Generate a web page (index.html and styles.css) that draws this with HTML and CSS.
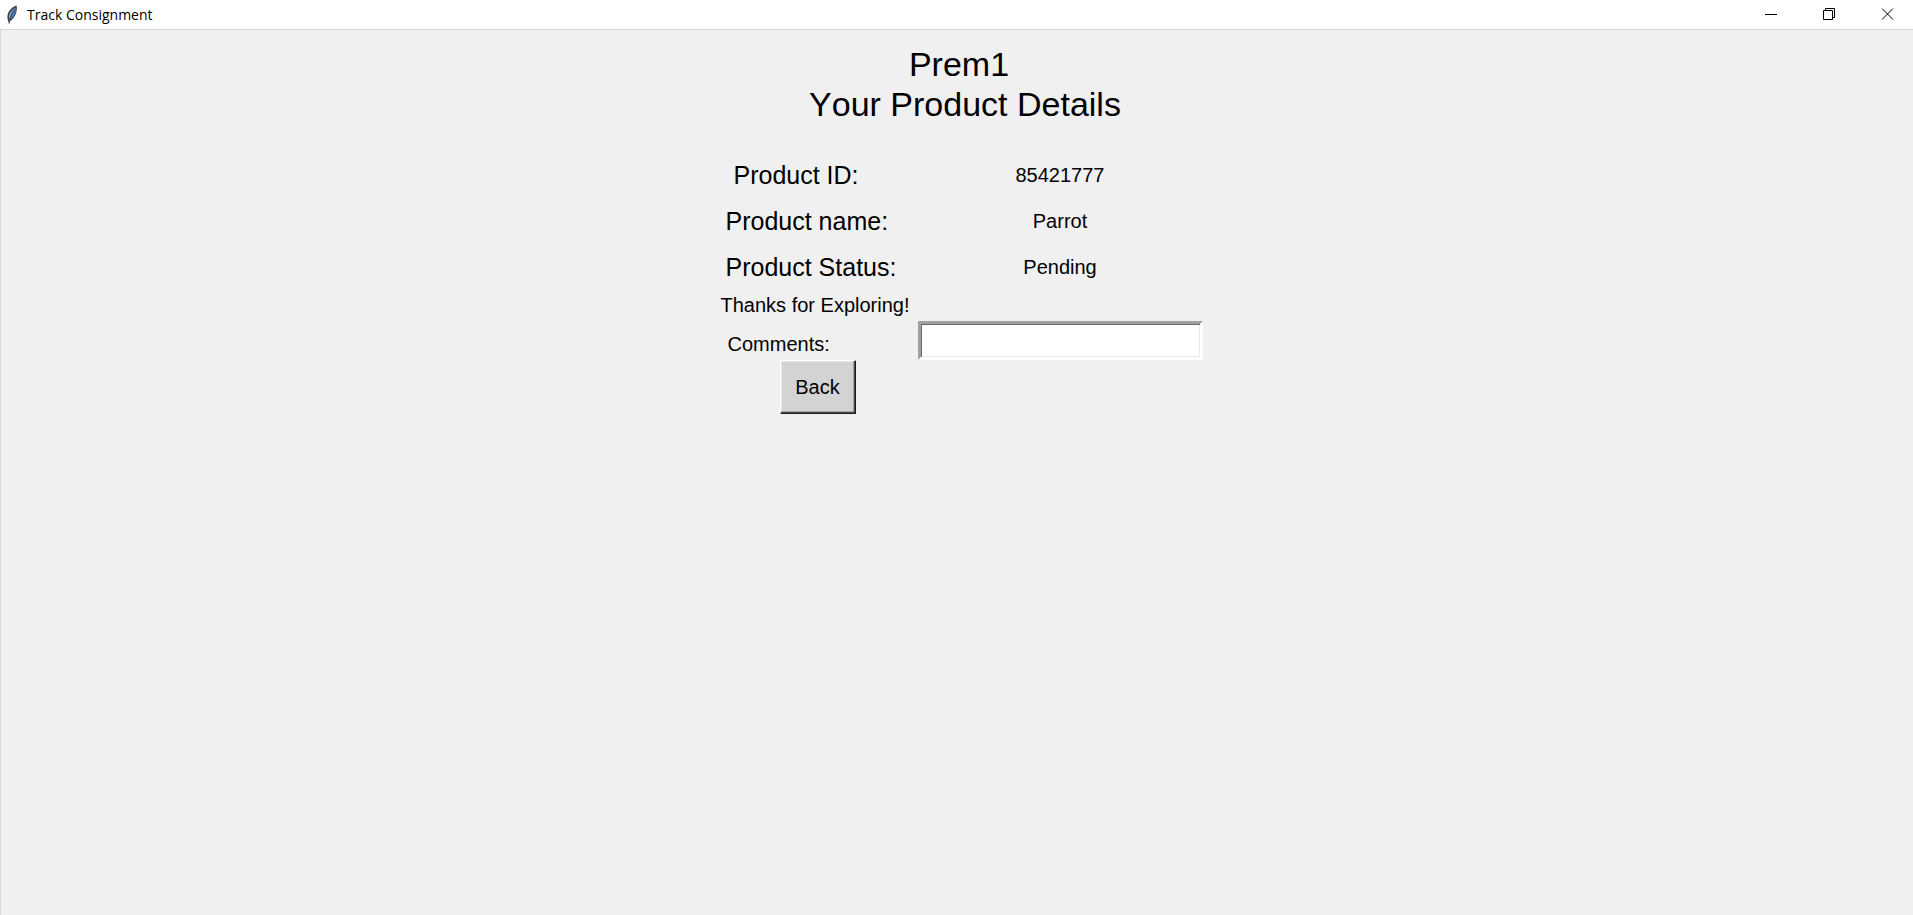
FILE: index.html
```html
<!DOCTYPE html>
<html lang="en">
<head>
<meta charset="utf-8">
<title>Track Consignment</title>
<link rel="stylesheet" href="styles.css">
</head>
<body>
<header class="titlebar">
  <svg class="app-icon" viewBox="0 0 12 20" aria-hidden="true">
    <path d="M10.5 .5C7 1.500 3 5 1.800 9c-.6 2.500-.6 4.500.2 6.200L3 19.500l1.200-3.500C7.500 14 10 9.500 10.600 6c.4-2.200.4-4-.1-5.500z" fill="#3a434d"/>
    <path d="M9.200 2.500C6.500 4.500 4 7.500 3.200 10.500c-.3 1.400-.2 2.500.2 3.500 1-4 3-8 5.800-11.500z" fill="#9dbce0"/>
    <path d="M9.900 2.500C7.500 6 5 10.500 4 14.500c3-2 5.400-5.500 5.900-8.800.2-1.200.2-2.400 0-3.200z" fill="#3f76b8"/>
  </svg>
  <span class="window-title">Track Consignment</span>
  <div class="window-controls">
    <button type="button" class="control" aria-label="Minimize">
      <svg class="glyph" viewBox="0 0 13 13"><path d="M0 6.500h12"/></svg>
    </button>
    <button type="button" class="control" aria-label="Restore">
      <svg class="glyph" viewBox="0 0 13 13"><path d="M.5 2.500h9v9h-9zM2.500 2.500v-2h9v9h-2"/></svg>
    </button>
    <button type="button" class="control" aria-label="Close">
      <svg class="glyph" viewBox="0 0 13 13"><path d="M1 .5l11 11M12 .5l-11 11"/></svg>
    </button>
  </div>
</header>
<main class="window-body">
  <h1 class="heading">Prem1</h1>
  <h2 class="heading heading-details">Your Product Details</h2>
  <form class="details">
    <label class="name name-first" for="product-id">Product ID:</label>
    <output class="value" id="product-id">85421777</output>
    <label class="name" for="product-name">Product name:</label>
    <output class="value" id="product-name">Parrot</output>
    <label class="name" for="product-status">Product Status:</label>
    <output class="value" id="product-status">Pending</output>
    <p class="thanks">Thanks for Exploring!</p>
    <label class="comments-label" for="comments">Comments:</label>
    <input class="comments" id="comments" type="text">
    <button class="back" type="button">Back</button>
  </form>
</main>
</body>
</html>
```

FILE: styles.css
```css
* {
  box-sizing: border-box;
}

body {
  margin: 0;
  min-height: 100vh;
  display: flex;
  flex-direction: column;
  background: #f0f0f0;
  color: #000;
  font-family: "Liberation Sans", Arial, sans-serif;
  font-size: 20px;
}

.titlebar {
  display: flex;
  align-items: center;
  height: 30px;
  padding-left: 6px;
  background: #fff;
  border-bottom: 1px solid #d6d9d8;
}

.app-icon {
  width: 12px;
  height: 20px;
}

.window-title {
  margin-left: 9px;
  font: 14px/20px "Open Sans", "Noto Sans", sans-serif;
}

.window-controls {
  display: flex;
  align-self: stretch;
  margin-left: auto;
}

.control {
  display: flex;
  align-items: center;
  justify-content: center;
  width: 58px;
  padding: 0 0 1px 6px;
  border: 0;
  background: none;
}

.glyph {
  width: 13px;
  height: 13px;
  fill: none;
  stroke: #000;
}

.window-body {
  flex: 1;
  display: flex;
  flex-direction: column;
  align-items: center;
  padding: 14px 0 0 4px;
  border-left: 1px solid #d9d9d9;
}

.heading {
  margin: 0;
  font-size: 34px;
  line-height: 40px;
  font-weight: 400;
  font-kerning: none;
}

.heading-details {
  padding-left: 12px;
}

.details {
  display: grid;
  grid-template-columns: 200px 285px;
  margin-top: 28px;
  padding-left: 2px;
}

.name {
  padding-left: 8px;
  font-size: 25px;
  line-height: 46px;
}

.name-first {
  padding-left: 16px;
}

.value {
  line-height: 46px;
  text-align: center;
}

.thanks {
  grid-column: 1 / -1;
  margin: 0;
  padding-left: 3px;
  line-height: 31px;
}

.comments-label {
  padding: 8px 0 0 10px;
  line-height: 31px;
}

.comments {
  width: 100%;
  height: 39px;
  padding: 4px;
  border: 3px solid;
  border-color: #a0a0a0 #fff #fff #a0a0a0;
  border-radius: 0;
  outline: 0;
  background: #fff;
  box-shadow: inset 1px 1px #696969, inset -1px -1px #e6e6e6;
  font: inherit;
}

.back {
  grid-column: 1;
  justify-self: center;
  width: 76px;
  height: 54px;
  padding: 0;
  border: 1px solid;
  border-color: #fff #1c1c1c #1c1c1c #fff;
  background: #d3d3d3;
  box-shadow: inset -1px -1px #4a4a4a, inset -2px -2px #a0a0a0, inset 1px 1px #e8e8e8;
  color: #000;
  font: inherit;
}
```
